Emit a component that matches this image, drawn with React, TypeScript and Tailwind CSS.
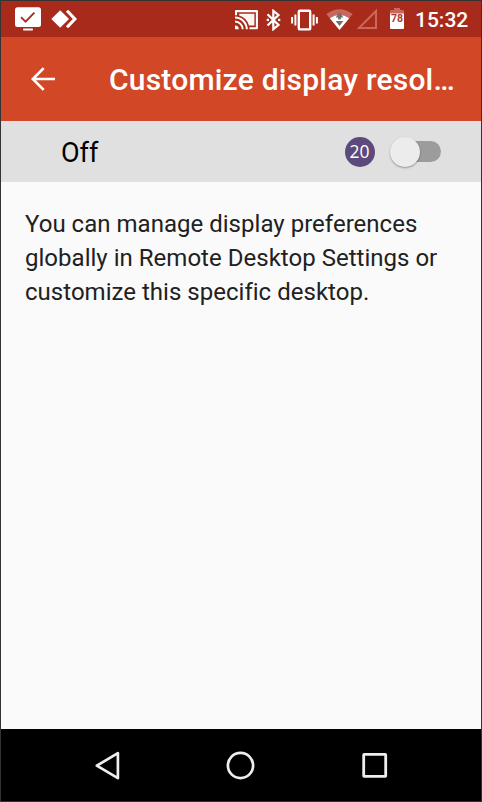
import React from 'react';

function StatusBar() {
  return (
    <div className="flex h-9 items-start bg-[#a72a1a] text-white">
      <svg className="ml-[14px] mt-[6px] shrink-0" width="26" height="24" viewBox="0 0 26 24">
        <rect x="0" y="0.3" width="26" height="19.7" rx="2.5" fill="#fff" />
        <path d="M6 10.2l4.6 4.5L19.4 5.6" fill="none" stroke="#a72a1a" strokeWidth="1.8" />
        <rect x="8" y="21.5" width="10" height="2" rx="0.8" fill="#fff" />
      </svg>
      <svg className="ml-[10px] mt-[9px] shrink-0" width="26" height="18" viewBox="0 0 26 18">
        <path d="M9.2 0.3L18 9l-8.8 8.7L0.3 9z" fill="#fff" />
        <path d="M16.4 0.3h1.3L26 9l-8.3 8.7h-1.3l-1.5-1.5L21.8 9l-6.9-7.2z" fill="#fff" />
      </svg>
      <svg className="ml-[158px] mt-[9px] shrink-0" width="24" height="20" viewBox="0 0 24 20">
        <path d="M4.2 3.8H19.4v11.7H14A14.5 14.5 0 0 0 4.2 5.4z" fill="#fff" fillOpacity="0.95" />
        <path d="M1 5.2V1.1h20.9v17.2h-7.4" fill="none" stroke="#fff" strokeWidth="2.1" strokeLinejoin="round" />
        <path d="M0 7.5A11.8 11.8 0 0 1 11.8 19.3M0 11.6A7.7 7.7 0 0 1 7.7 19.3" fill="none" stroke="#fff" strokeWidth="2" />
        <path d="M0 15.5a3.8 3.8 0 0 1 3.8 3.8H0z" fill="#fff" />
      </svg>
      <svg className="ml-[7px] mt-[8px] shrink-0" width="15" height="22" viewBox="0 0 15 22">
        <path d="M1.5 5.2L12.5 16l-5.2 4.2V1.8l5.2 4.2L1.5 16.5" fill="none" stroke="#fff" strokeWidth="2.2" />
        <path d="M0.7 9.7H3v2.4H0.7zM12 9.7h2.3v2.4H12z" fill="#fff" />
      </svg>
      <svg className="ml-[10px] mt-[8px] shrink-0" width="27" height="22" viewBox="0 0 27 22">
        <rect x="7.8" y="1.8" width="11.4" height="18.6" rx="1" fill="none" stroke="#fff" strokeWidth="2.4" />
        <path d="M1.1 8v6.5M4.4 5.5v11M22.6 5.5v11M25.9 8v6.5" stroke="#fff" strokeWidth="2" />
      </svg>
      <svg className="ml-[8px] mt-[7px] shrink-0" width="27" height="22" viewBox="0 0 27 22">
        <path d="M0.3 6.1Q13.5-3.5 26.7 6.1L13.5 22z" fill="#c8675b" />
        <path d="M3.8 10.3Q13.5 3.8 23.2 10.3L13.5 22z" fill="#fff" />
        <path d="M13.5 4l3.8 5.5h-2.5v2h-2.6v-2H9.7zM9.7 13h7.6L13.5 18z" fill="#6f6f6f" />
      </svg>
      <svg className="ml-[3px] mt-[7px] shrink-0" width="22" height="21" viewBox="0 0 22 21">
        <path d="M20 3v17H3z" fill="none" stroke="#c8675b" strokeWidth="2" />
      </svg>
      <svg className="ml-[12px] mt-[7px] shrink-0" width="14" height="22" viewBox="0 0 14 22">
        <path d="M4 0h6v2H4zM1 2h12a1 1 0 0 1 1 1v3H0V3a1 1 0 0 1 1-1z" fill="#c8675b" />
        <path d="M0 5.5h14V20a1 1 0 0 1-1 1H1a1 1 0 0 1-1-1z" fill="#fff" />
        <text x="7" y="14" textAnchor="middle" fill="#a93b2e" className="font-['Roboto',sans-serif] text-[10.5px] font-bold">78</text>
      </svg>
      <span className="ml-[11px] mt-[1px] text-[21px] font-medium leading-9">15:32</span>
    </div>
  );
}

function TitleBar() {
  return (
    <header className="flex h-[84px] items-center bg-[#d24726] text-white">
      <svg className="ml-[30px] shrink-0" width="24" height="24" viewBox="0 0 24 24">
        <path d="M24 12H2M12.7 1.1L1.8 12l10.9 10.9" fill="none" stroke="#fff" strokeWidth="2.7" />
      </svg>
      <h1 className="ml-[54px] mt-px whitespace-nowrap text-[30px] font-medium leading-10 tracking-[0.21px]">
        Customize display resol…
      </h1>
    </header>
  );
}

function ToggleRow() {
  return (
    <div className="flex h-[61px] items-center bg-[#e0e0e0]">
      <span className="ml-[60px] mt-[2px] flex-1 text-[27px] leading-9 text-black">Off</span>
      <span className="flex size-[30px] items-center justify-center rounded-full bg-[#5e497c] font-['Open_Sans',sans-serif] text-[17.5px] leading-none text-white">
        20
      </span>
      <button className="ml-[15.5px] mr-[40px] flex h-[21px] w-[51px] items-center rounded-full" aria-label="Custom resolution">
        <span className="z-10 size-[30px] shrink-0 rounded-full bg-[#ececec] shadow-[0_1px_2px_rgba(0,0,0,0.35)]" />
        <span className="-ml-4 h-[21px] w-[37px] shrink-0 rounded-full bg-[#9c9c9c]" />
      </button>
    </div>
  );
}

function NavBar() {
  return (
    <nav className="flex h-[72px] items-center bg-black">
      <svg className="ml-[94px] mt-[2px]" width="26" height="30" viewBox="0 0 26 30">
        <path d="M22.9 2.2v25L1.8 14.7z" fill="none" stroke="#eee" strokeWidth="2.7" strokeLinejoin="round" />
      </svg>
      <svg className="ml-[105px]" width="30" height="30" viewBox="0 0 30 30">
        <circle cx="14.5" cy="15.5" r="12.6" fill="none" stroke="#eee" strokeWidth="2.7" />
      </svg>
      <svg className="ml-[106px]" width="26" height="26" viewBox="0 0 26 26">
        <rect x="1.7" y="2.3" width="22" height="22" rx="0.5" fill="none" stroke="#eee" strokeWidth="2.8" />
      </svg>
    </nav>
  );
}

export default function App() {
  return (
    <div className="flex h-[802px] w-[482px] flex-col overflow-hidden border border-[#333] bg-[#fafafa] font-['Roboto',sans-serif]">
      <StatusBar />
      <TitleBar />
      <ToggleRow />
      <main className="flex-1 px-6 pt-[25px]">
        <p className="w-[430px] text-[24px] leading-[34px] tracking-[0.02px] text-[#212121]">
          You can manage display preferences globally in Remote Desktop Settings or customize this specific desktop.
        </p>
      </main>
      <NavBar />
    </div>
  );
}
